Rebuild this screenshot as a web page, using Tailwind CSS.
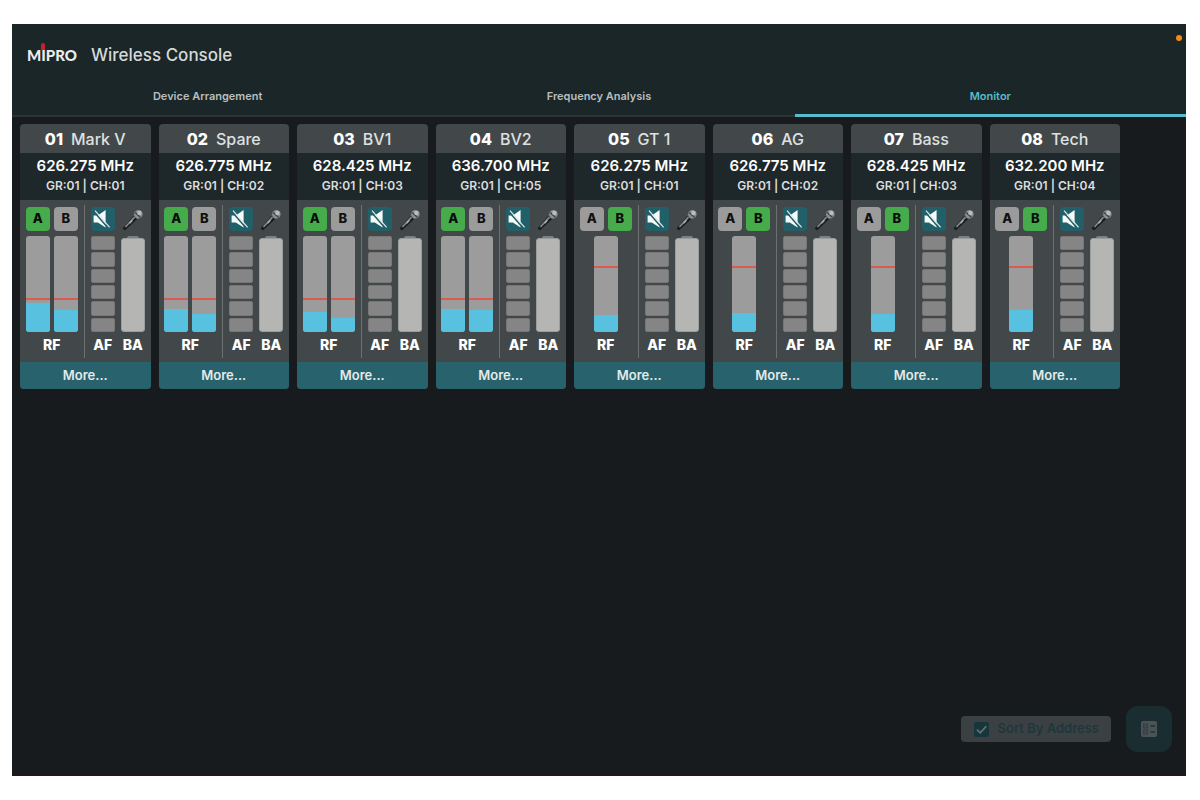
<!DOCTYPE html>
<html lang="en">
<head>
<meta charset="utf-8">
<title>Wireless Console</title>
<script src="https://cdn.jsdelivr.net/npm/@tailwindcss/browser@4"></script>
</head>
<body class="bg-white font-['Inter',sans-serif] text-white">
<div class="flex min-h-screen pt-6 pr-[14px] pb-6 pl-3">
  <div class="flex flex-1 flex-col border-b-4 border-[#1b191a] bg-[#171b1e]">
    <header class="bg-[#1b2628]">
      <div class="relative flex h-[62px] items-center gap-[14px] px-[15px]">
        <div class="flex font-['Lato',sans-serif] text-[15px] leading-5 font-black text-[#ececec]" aria-label="MIPRO">
          <span>M</span><span class="relative">I<i class="absolute -top-[2px] left-0 h-[7px] w-[4px] rounded-t-xs bg-[#c8202c]"></i></span><span>PRO</span>
        </div>
        <h1 class="text-[17px] leading-6 font-medium text-[#d5d9da]">Wireless Console</h1>
        <span class="absolute top-[11px] right-[4px] size-[6px] rounded-full bg-[#f08c12]"></span>
      </div>
      <nav class="grid grid-cols-3 text-[11px] font-semibold text-[#b9bebf]">
        <button class="h-[31px] border-b-2 border-[#2a3336] pb-2">Device Arrangement</button>
        <button class="h-[31px] border-b-2 border-[#2a3336] pb-2">Frequency Analysis</button>
        <button class="h-[31px] border-b-3 border-[#57bccb] pb-2 text-[#57bccb]">Monitor</button>
      </nav>
    </header>
    <main id="cards" class="mr-[66px] ml-2 grid grid-cols-8 gap-2 pt-[7px]"></main>
    <footer class="mt-auto flex items-center justify-end gap-[15px] pr-[14px] pb-5">
      <label class="flex h-[26px] items-center gap-[9px] rounded bg-[#3b4143] pr-3 pl-[13px] text-[13px] font-semibold text-[#1f373c]">
        <span class="relative flex size-[15px]">
          <input type="checkbox" checked class="size-[15px] appearance-none rounded-xs bg-[#17363b]">
          <svg class="pointer-events-none absolute inset-0" viewBox="0 0 15 15" fill="none" stroke="#6b7375" stroke-width="1.6"><path d="M3 7.6 6.2 10.8 12.3 4.2"/></svg>
        </span>
        Sort By Address
      </label>
      <button class="flex size-[46px] items-center justify-center rounded-xl bg-[#1a2e32]" aria-label="Layout">
        <svg class="size-4" viewBox="0 0 16 16"><rect width="16" height="16" rx="2" fill="#4a5456"/><g fill="#414b4d" stroke="#353f42"><rect x="2.5" y="3" width="4" height="4"/><rect x="2.5" y="9" width="4" height="4"/></g><path d="M9.5 5H14M9.5 11H14" stroke="#1f3236" stroke-width="1.6"/></svg>
      </button>
    </footer>
  </div>
</div>
<script>
const channels = [
  ["01", "Mark V", "626.275", "01", "A", [29, 22]],
  ["02", "Spare", "626.775", "02", "A", [23, 18]],
  ["03", "BV1", "628.425", "03", "A", [20, 14]],
  ["04", "BV2", "636.700", "05", "A", [23, 22]],
  ["05", "GT 1", "626.275", "01", "B", [17]],
  ["06", "AG", "626.775", "02", "B", [19]],
  ["07", "Bass", "628.425", "03", "B", [18]],
  ["08", "Tech", "632.200", "04", "B", [22]],
];
const on = "size-6 rounded bg-[#46ac4b] text-[13px] font-extrabold text-[#0a0d0a]";
const off = "size-6 rounded bg-[#9b9b9b] text-[13px] font-extrabold text-[#111]";
const segment = '<i class="flex-1 rounded-xs border border-[#777] bg-[#858585]"></i>';
document.getElementById("cards").innerHTML = channels.map(([no, name, mhz, ch, ant, levels]) => {
  const line = levels.length > 1 ? 33 : 65;
  const bars = levels.map(v => `<div class="relative h-24 w-6 overflow-hidden rounded-[3px] bg-[#9c9c9c]">
      <i class="absolute inset-x-0 bottom-0 bg-[#59c1e0]" style="height:${v}px"></i>
      <i class="absolute inset-x-0 h-[2px] bg-[#dc5a50]" style="bottom:${line - 1}px"></i></div>`).join("");
  return `<article class="overflow-hidden rounded bg-[#424849]">
    <h2 class="flex h-[29px] items-center justify-center gap-2 pt-px text-[16px] font-medium text-[#dfe1e1]"><b class="font-extrabold text-white">${no}</b>${name}</h2>
    <div class="h-[47px] bg-[#1e282b] pt-1 text-center">
      <p class="text-[15px] leading-[18px] font-semibold">${mhz} MHz</p>
      <p class="text-[12px] leading-[22px] font-semibold text-[#dcdede]">GR:01 | CH:${ch}</p>
    </div>
    <div class="flex h-[162px] justify-center pt-[5px]">
      <div class="flex w-[52px] flex-col items-center pt-[2px]">
        <div class="flex gap-1"><button class="${ant === "A" ? on : off}">A</button><button class="${ant === "B" ? on : off}">B</button></div>
        <div class="mt-[5px] flex gap-1">${bars}</div>
        <span class="mt-[3px] text-[14px] leading-5 font-extrabold">RF</span>
      </div>
      <i class="mx-[6px] h-[153px] w-px bg-[#6b7071]"></i>
      <div class="flex w-6 flex-col items-center pt-[2px]">
        <button class="size-6 rounded bg-[#226069]" aria-label="Mute">
          <svg class="size-6" viewBox="0 0 24 24"><path d="M2.6 8.6h4.2L14.6 3v17.4L6.8 15.4H2.6z" fill="#f6fafa"/><path d="M2.6 4.2 17 21" stroke="#226069" stroke-width="1.6"/><path d="M4 3.6 18.6 20.4" stroke="#dfe9ea" stroke-width="1.2"/></svg>
        </button>
        <div class="mt-[5px] flex h-24 w-6 flex-col gap-[2px]">${segment.repeat(6)}</div>
        <span class="mt-[3px] text-[14px] leading-5 font-extrabold">AF</span>
      </div>
      <div class="ml-[6px] flex w-6 flex-col items-center pt-[2px]">
        <svg class="size-6" viewBox="0 0 24 24"><path d="M1.6 21.4 12.6 8.8l3.6 3.2L4 23.4z" fill="#1b1c1d"/><path d="M3.8 19.4 12.8 9.4l1.4 1.3L5 20.4z" fill="#85898a"/><path d="M8.6 16.4l2.8-3" stroke="#b4b8b9" stroke-width="1.2"/><path d="M12 8.4 15 5.4l4.6 4.2-3.4 2.6z" fill="#595e5f"/><circle cx="17.4" cy="7.2" r="4.2" fill="#8b8f90"/><path d="m14.2 5.6 5.4 5" stroke="#3c4142" stroke-width="1.4"/><circle cx="18.4" cy="6" r="2.2" fill="#b9bdbe"/></svg>
        <i class="mt-[5px] h-[2px] w-3 rounded-t-xs bg-[#7d8080]"></i>
        <i class="h-[94px] w-6 rounded-[3px] border border-[#9c9d9d] bg-[#b5b5b4]"></i>
        <span class="mt-[3px] text-[14px] leading-5 font-extrabold">BA</span>
      </div>
    </div>
    <button class="h-[27px] w-full bg-[#28626c] pt-px text-[13px] font-semibold text-[#e4eaea]">More...</button>
  </article>`;
}).join("");
</script>
</body>
</html>
